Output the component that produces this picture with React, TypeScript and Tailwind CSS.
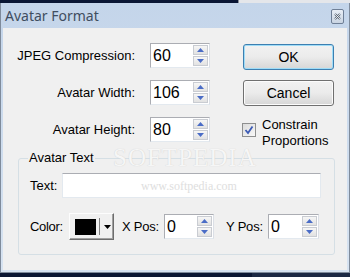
const font = { fontFamily: '"Liberation Sans", Arial, sans-serif' };

const Arrow = ({ up }: { up?: boolean }) => (
    <svg width="7" height="4" viewBox="0 0 7 4">
        {up ? <path d="M0 4 L3.5 0 L7 4 Z" fill="#4a6cc6" /> : <path d="M0 0 L3.5 4 L7 0 Z" fill="#4a6cc6" />}
    </svg>
);

const SpinBox: React.FC<{ value: string; className: string }> = ({ value, className }) => (
    <div className={`flex h-[25px] shrink-0 border border-[#abadb3] border-r-[#dbdfe6] border-b-[#e3e9ef] bg-white ${className}`}>
        <div className="flex flex-1 items-center pl-[2px] text-[16px] leading-none text-black">{value}</div>
        <div className="flex w-[17px] flex-col gap-px p-px">
            <div className="flex flex-1 items-center justify-center border border-[#c9ccd2] bg-gradient-to-b from-[#f6f6f6] to-[#e2e2e2]">
                <Arrow up />
            </div>
            <div className="flex flex-1 items-center justify-center border border-[#c9ccd2] bg-gradient-to-b from-[#f6f6f6] to-[#e2e2e2]">
                <Arrow />
            </div>
        </div>
    </div>
);

const Row: React.FC<{ label: string; value: string }> = ({ label, value }) => (
    <div className="flex h-[25px] items-center justify-end gap-[15px]">
        <span className="whitespace-nowrap text-[13px] text-black">{label}</span>
        <SpinBox value={value} className="w-[60px]" />
    </div>
);

const App: React.FC = () => {
    return (
        <div className="relative flex h-[277px] w-[350px] flex-col overflow-hidden bg-[#0c1733]" style={font}>
            {/* screen behind the dialog */}
            <div className="flex h-[3px]">
                <div className="w-[238px] bg-[#0a1634]" />
                <div className="flex-1 border-l border-[#8a8f98] bg-[#e4e6ea]" />
            </div>

            {/* window */}
            <div className="flex h-[270px] flex-col border-x border-b border-[#7f8b9b] bg-gradient-to-b from-[#c4d5ea] to-[#d7e3f1] px-[2px] pb-[2px]">
                {/* title bar */}
                <div className="flex h-[25px] items-center justify-between">
                    <span className="ml-[2px] text-[14px] text-[#3f4d60]" style={{ fontFamily: '"Noto Sans", sans-serif' }}>
                        Avatar Format
                    </span>
                    <div className="mr-[3px] mt-[2px] flex h-[15px] w-[13px] items-center justify-center rounded-[2px] border border-[#6f7f96] bg-gradient-to-b from-[#e9eef5] to-[#c9d4e2]">
                        <svg width="7" height="7" viewBox="0 0 7 7">
                            <path d="M1 1 L6 6 M6 1 L1 6" stroke="#5b6675" strokeWidth="2" />
                            <path d="M1 1 L6 6 M6 1 L1 6" stroke="#ffffff" strokeWidth="0.8" />
                        </svg>
                    </div>
                </div>

                {/* client area */}
                <div className="flex h-[242px] flex-col bg-[#f0f0f0]">
                    <div className="flex h-[123px] pt-[15px]">
                        <div className="flex w-[207px] flex-col gap-[12px]">
                            <Row label="JPEG Compression:" value="60" />
                            <Row label="Avatar Width:" value="106" />
                            <Row label="Avatar Height:" value="80" />
                        </div>
                        <div className="ml-[33px] flex flex-col pt-px">
                            <button className="flex h-[26px] w-[91px] items-center justify-center rounded-[3px] border border-[#3c7fb1] bg-gradient-to-b from-[#f2f2f2] via-[#ebebeb] to-[#d6d6d6] text-[14px] text-black shadow-[inset_0_0_0_1px_#9fdcf7]">
                                OK
                            </button>
                            <button className="mt-[10px] flex h-[26px] w-[91px] items-center justify-center rounded-[3px] border border-[#707070] bg-gradient-to-b from-[#f2f2f2] via-[#ebebeb] to-[#d6d6d6] text-[14px] text-black shadow-[inset_0_0_0_1px_#fcfcfc]">
                                Cancel
                            </button>
                            <div className="-ml-px mt-[11px] flex items-start gap-[6px]">
                                <div className="mt-[6px] flex h-[14px] w-[14px] items-center justify-center border border-[#8e8f8f] bg-gradient-to-br from-[#dcdcdc] to-[#f8f8f8]">
                                    <svg width="10" height="10" viewBox="0 0 10 10">
                                        <path d="M1.5 5 L4 8 L8.5 1.5" stroke="#3c5bb5" strokeWidth="1.8" fill="none" />
                                    </svg>
                                </div>
                                <div className="text-[13px] leading-[16px] text-black">
                                    Constrain
                                    <br />
                                    Proportions
                                </div>
                            </div>
                        </div>
                    </div>

                    <fieldset className="ml-[15px] h-[104px] w-[317px] rounded-[3px] border border-[#d5dfe5] px-[11px]">
                        <legend className="-ml-[2px] px-px text-[13px] leading-[14px] text-black">Avatar Text</legend>
                        <div className="mt-[8px] flex items-center gap-[5px]">
                            <span className="text-[13px] text-black">Text:</span>
                            <div className="h-[25px] w-[259px] border border-[#e3e9ef] border-t-[#abadb3] bg-white" />
                        </div>
                        <div className="mt-[15px] flex items-center whitespace-nowrap">
                            <span className="shrink-0 text-[13px] tracking-[-0.3px] text-black">Color:</span>
                            <div className="ml-[6px] flex h-[27px] w-[45px] shrink-0 items-center border border-[#fdfdfd] border-b-[#6d6d6d] border-r-[#6d6d6d] bg-[#f0f0f0] pl-[5px] shadow-[inset_-1px_-1px_0_#a0a0a0]">
                                <div className="h-[16px] w-[21px] bg-black" />
                                <div className="ml-[3px] h-[17px] w-px bg-[#808080]" />
                                <svg className="ml-[4px]" width="7" height="4" viewBox="0 0 7 4">
                                    <path d="M0 0 L3.5 4 L7 0 Z" fill="#000" />
                                </svg>
                            </div>
                            <span className="ml-[8px] shrink-0 text-[13px] tracking-[-0.2px] text-black">X Pos:</span>
                            <SpinBox value="0" className="ml-[5px] w-[50px]" />
                            <span className="ml-[12px] shrink-0 text-[13px] tracking-[-0.2px] text-black">Y Pos:</span>
                            <SpinBox value="0" className="ml-[5px] w-[51px]" />
                        </div>
                    </fieldset>
                </div>
            </div>

            <div className="flex flex-1">
                <div className="w-[252px] bg-[#0c1733]" />
                <div className="flex-1 bg-[#1c2944]" />
            </div>

            {/* watermark */}
            <div
                className="pointer-events-none absolute left-[113px] top-[139px] text-[25px] tracking-[1px] text-[#f6f6f6] [text-shadow:0_0_1px_#c8c8c8]"
                style={{ fontFamily: '"Liberation Serif", serif' }}
            >
                SOFTPEDIA
            </div>
            <div className="pointer-events-none absolute left-[141px] top-[177px] text-[12px] text-[#dedede]" style={{ fontFamily: '"Liberation Serif", serif' }}>
                www.softpedia.com
            </div>
        </div>
    );
};

export default App;
